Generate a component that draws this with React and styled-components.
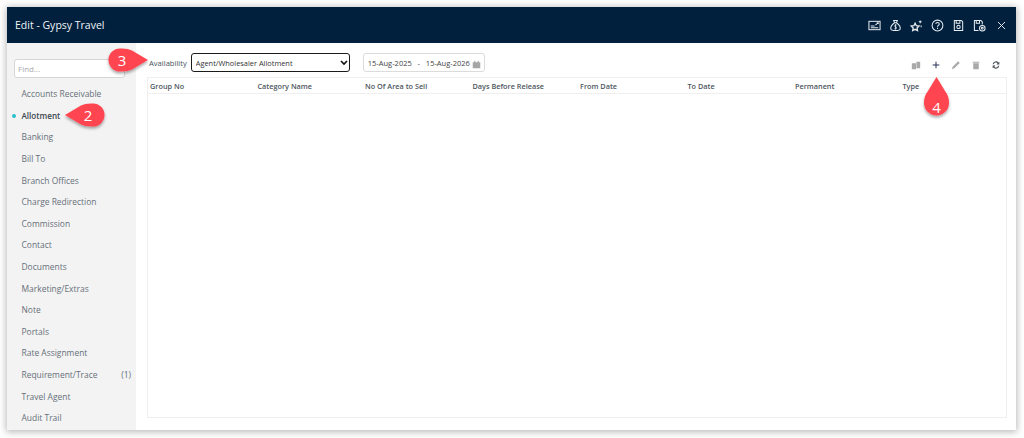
import React from "react";
import styled, { createGlobalStyle } from "styled-components";

const Global = createGlobalStyle`
  html, body { margin: 0; padding: 0; background: #fff; }
  body { font-family: "Open Sans", "Liberation Sans", sans-serif; width: 1024px; height: 438px; overflow: hidden; }
`;
const Page = styled.div`
  width: 1024px; height: 438px; padding: 7px 8px 8px 7px; box-sizing: border-box; position: relative;
`;
const Window = styled.div`
  height: 423px; display: flex; flex-direction: column; background: #fff;
  box-shadow: 0 1px 7px 1px rgba(0,0,0,.28);
`;
const Header = styled.header`
  height: 36px; flex: none; background: #00203e; color: #fff; display: flex; align-items: center;
  justify-content: space-between; padding: 0 10px 0 8px;
`;
const Title = styled.h1`
  margin: 0; font-size: 10.5px; font-weight: 400; color: #f2f5f8;
`;
const HeaderIcons = styled.div`
  display: flex; align-items: center; gap: 8px;
`;
const HeadIcon = styled.svg`
  width: 13px; height: 13px; fill: none; stroke: #e6ebf0; stroke-width: 1.1; display: block;
`;
const CloseIcon = styled(HeadIcon)`
  width: 9px; height: 9px; margin-left: 3px; stroke-width: 1.5;
`;
const Body = styled.div`
  flex: 1; display: flex; min-height: 0;
`;
const Sidebar = styled.aside`
  width: 129px; flex: none; background: #f3f3f3; padding: 16px 5px 0 7px; box-sizing: border-box;
`;
const Find = styled.input`
  width: 111px; height: 19px; box-sizing: border-box; border: 1px solid #d6d6d6; border-radius: 3px;
  background: #fff; padding: 0 3px; font: 400 8px "Open Sans", sans-serif; display: block; margin-bottom: 5px;
  &::placeholder { color: #a9a9a9; }
`;
const Menu = styled.ul`
  list-style: none; margin: 0; padding: 0;
`;
const Item = styled.li`
  height: 21.6px; display: flex; align-items: center; justify-content: space-between; position: relative;
  padding-left: 7.5px; font-size: ${p => (p.$active ? "8.1px" : "8.45px")}; color: ${p => (p.$active ? "#3c4650" : "#67707a")};
  font-weight: ${p => (p.$active ? 600 : 400)}; white-space: nowrap;
  ${p => p.$active && `&::before { content: ""; position: absolute; left: -2px; top: 9px; width: 4px; height: 4px; border-radius: 50%; background: #27c0cc; }`}
`;
const Main = styled.main`
  flex: 1; min-width: 0; padding: 10px 9px 12px 11px; display: flex; flex-direction: column; gap: 5px;
`;
const Toolbar = styled.div`
  height: 19px; flex: none; display: flex; align-items: center; margin-left: 2px;
`;
const Label = styled.label`
  font-size: 7.6px; color: #46505a; margin-right: 4px;
`;
const Select = styled.select`
  width: 159px; height: 19px; box-sizing: border-box; border: 1.2px solid #1b1b1b; border-radius: 3px;
  appearance: none;
  background: #fff url("data:image/svg+xml,%3Csvg xmlns='http://www.w3.org/2000/svg' width='8' height='6'%3E%3Cpath d='M1 1l3 3 3-3' fill='none' stroke='%23111' stroke-width='1.6'/%3E%3C/svg%3E") no-repeat right 1px center;
  font: 400 7.4px "Open Sans", sans-serif; color: #333; padding: 0 0 0 4px; margin-right: 13px; outline: none;
`;
const DateBox = styled.div`
  width: 122px; height: 19px; box-sizing: border-box; border: 1px solid #dcdcdc; border-radius: 3px;
  display: flex; align-items: center; padding: 0 3px 0 4px; font-size: 7.5px; color: #444; white-space: pre;
  justify-content: space-between;
`;
const CalIcon = styled.svg`
  width: 9px; height: 9px; display: block; fill: #a5a5a5; margin-top: 4px;
`;
const Actions = styled.div`
  margin-left: auto; display: flex; align-items: center; gap: 10px; padding: 5px 6px 0 0;
`;
const ActIcon = styled.svg`
  width: 10px; height: 10px; display: block; fill: ${p => p.$c || "#a9a9a9"};
`;
const Table = styled.div`
  flex: 1; border: 1px solid #efefef; min-height: 0;
`;
const HeadRow = styled.div`
  height: 15px; display: grid; grid-template-columns: repeat(8, 107.5px); align-items: center;
  border-bottom: 1px solid #efefef; padding-left: 2px;
`;
const Col = styled.div`
  font-size: 7.3px; font-weight: 600; color: #4d5660; white-space: nowrap;
`;
const CalloutSvg = styled.svg`
  position: absolute; left: ${p => p.$x}px; top: ${p => p.$y}px; overflow: visible;
`;
const Num = styled.text`
  fill: #fff; font: 400 15px "Open Sans", sans-serif; text-anchor: middle;
`;

const items = ["Accounts Receivable","Allotment","Banking","Bill To","Branch Offices","Charge Redirection","Commission","Contact","Documents","Marketing/Extras","Note","Portals","Rate Assignment","Requirement/Trace","Travel Agent","Audit Trail"];
const cols = ["Group No","Category Name","No Of Area to Sell","Days Before Release","From Date","To Date","Permanent","Type"];

const Callout = ({ x, y, w, h, d, n, tx, ty }) => (
  <CalloutSvg $x={x} $y={y} width={w} height={h} viewBox={`0 0 ${w} ${h}`}>
    <defs>
      <filter id={`s${n}`} x="-30%" y="-30%" width="160%" height="170%">
        <feDropShadow dx="0" dy="2" stdDeviation="1.6" floodColor="#000" floodOpacity=".35" />
      </filter>
    </defs>
    <path d={d} fill="#ff4550" filter={`url(#s${n})`} />
    <Num x={tx} y={ty}>{n}</Num>
  </CalloutSvg>
);

export default function App() {
  return (
    <Page>
      <Global />
      <Window>
        <Header>
          <Title>Edit - Gypsy Travel</Title>
          <HeaderIcons>
            <HeadIcon viewBox="0 0 14 14"><rect x="1" y="2.5" width="12" height="9" /><path d="M3 9.500h8M3 7.500h4M8 6.500l3-2.500M9.500 4H11v1.500" /></HeadIcon>
            <HeadIcon viewBox="0 0 14 14"><path d="M5 1.500h4L8 4H6zM6 4C3 6 1.500 9 2 11c.3 1.200 1.500 1.500 5 1.500s4.700-.3 5-1.500c.5-2-1-5-4-7" /><path d="M8.300 6.500H6.400v2h1.400v2H5.800M7 5.500v6" strokeWidth=".8" /></HeadIcon>
            <HeadIcon viewBox="0 0 14 14"><path d="M5.500 4.500l1.300 2.700 2.900.4-2.100 2 .5 2.900-2.600-1.400-2.600 1.400.5-2.900-2.100-2 2.900-.4z" strokeWidth="1.400" /><path d="M11 1.500v3M9.500 3h3M12 7v2" /></HeadIcon>
            <HeadIcon viewBox="0 0 14 14"><circle cx="7" cy="7" r="5.800" /><path d="M5.200 5.500C5.200 4.300 6 3.700 7 3.700s1.900.6 1.900 1.700c0 1.500-1.900 1.500-1.900 3M7 9.500v1.200" /></HeadIcon>
            <HeadIcon viewBox="0 0 14 14"><path d="M2.500 1.500h7.500l1.500 1.500v9.500h-9zM4.500 1.500v3h4v-3" /><circle cx="7" cy="8.500" r="1.800" /></HeadIcon>
            <HeadIcon viewBox="0 0 14 14"><path d="M6 12.500H1.500v-11h7L10 3v3M3.500 1.500v3h3.500v-3" /><circle cx="10" cy="10" r="3" /><circle cx="10" cy="10" r="1" /></HeadIcon>
            <CloseIcon viewBox="0 0 14 14"><path d="M1.500 1.500l11 11M12.500 1.500l-11 11" /></CloseIcon>
          </HeaderIcons>
        </Header>
        <Body>
          <Sidebar>
            <Find placeholder="Find..." />
            <Menu>
              {items.map(i => (
                <Item key={i} $active={i === "Allotment"}>
                  <span>{i}</span>
                  {i === "Requirement/Trace" && <span>(1)</span>}
                </Item>
              ))}
            </Menu>
          </Sidebar>
          <Main>
            <Toolbar>
              <Label>Availability</Label>
              <Select defaultValue="a"><option value="a">Agent/Wholesaler Allotment</option></Select>
              <DateBox>
                <span>15-Aug-2025   -   15-Aug-2026</span>
                <CalIcon viewBox="0 0 12 12"><path d="M1 3h10v8H1zM3 1h1.500v2H3zM7.500 1H9v2H7.500z" /></CalIcon>
              </DateBox>
              <Actions>
                <ActIcon viewBox="0 0 12 12"><path d="M1 4h5v7H1zM6.500 2H11v8H6.500z" /></ActIcon>
                <ActIcon viewBox="0 0 12 12" $c="#2a3350"><path d="M5.400 2h1.200v3.400H10v1.200H6.600V10H5.400V6.600H2V5.400h3.400z" /></ActIcon>
                <ActIcon viewBox="0 0 12 12"><path d="M8.500 1.500l2 2L4 10l-3 1 1-3z" /></ActIcon>
                <ActIcon viewBox="0 0 12 12"><path d="M2 2h8v1.200H2zM2.700 4h6.600v7H2.700z" /></ActIcon>
                <ActIcon viewBox="0 0 12 12" $c="#4a4f55"><path d="M2 5a4 4 0 0 1 7-2l1-1v3.500H6.500l1.500-1.500A2.700 2.700 0 0 0 3.300 5zM10 7a4 4 0 0 1-7 2l-1 1V6.500h3.500L4 8a2.700 2.700 0 0 0 4.700-1z" /></ActIcon>
              </Actions>
            </Toolbar>
            <Table>
              <HeadRow>
                {cols.map(c => <Col key={c}>{c}</Col>)}
              </HeadRow>
            </Table>
          </Main>
        </Body>
      </Window>
      <Callout n={2} x={64} y={102} w={44} h={26} tx={24} ty={19} d="M1 13 L17 3.500 Q21 1.500 27 1.500 H29 A11 11 0 0 1 29 24.500 H27 Q21 24.500 17 22.500 Z" />
      <Callout n={3} x={105} y={47} w={44} h={26} tx={17} ty={19} d="M43 13 L27 3.500 Q23 1.500 17 1.500 H15 A11 11 0 0 0 15 24.500 H17 Q23 24.500 27 22.500 Z" />
      <Callout n={4} x={923} y={76} w={26} h={44} tx={13.500} ty={37} d="M13.500 1 L22 15 Q26 20 26 27 A12.500 12.500 0 0 1 1 27 Q1 20 5 15 Z" />
    </Page>
  );
}
